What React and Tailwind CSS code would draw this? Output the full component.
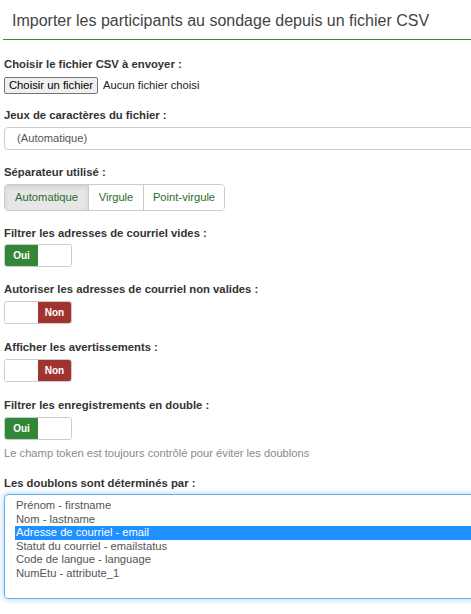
import React, { useState } from "react";

const font = { fontFamily: '"Liberation Sans", Arial, sans-serif' };

function Label({ children, className = "" }) {
  return (
    <div className={"h-[16px] leading-[16px] text-[11.3px] font-bold text-[#333] " + className}>
      {children}
    </div>
  );
}

function Toggle({ on }) {
  return (
    <div className="flex w-[68px] h-[23px] border border-[#ccc] rounded-[3px] overflow-hidden">
      {on ? (
        <>
          <div className="w-1/2 bg-[#328637] text-white text-[10px] font-bold flex items-center justify-center">
            Oui
          </div>
          <div className="w-1/2 bg-white" />
        </>
      ) : (
        <>
          <div className="w-1/2 bg-white" />
          <div className="w-1/2 bg-[#a03330] text-white text-[10px] font-bold flex items-center justify-center">
            Non
          </div>
        </>
      )}
    </div>
  );
}

export default function App() {
  const [sep, setSep] = useState("Automatique");
  const [picked, setPicked] = useState("Adresse de courriel - email");

  const separators = ["Automatique", "Virgule", "Point-virgule"];
  const fields = [
    "Prénom - firstname",
    "Nom - lastname",
    "Adresse de courriel - email",
    "Statut du courriel - emailstatus",
    "Code de langue - language",
    "NumEtu - attribute_1",
  ];

  return (
    <div className="w-[471px] h-[614px] overflow-hidden bg-white" style={font}>
      <div className="w-[520px] pl-[3px]">
        {/* Title */}
        <div className="pl-[9px] pt-[10px] pb-[7px] leading-[22px] text-[16px] text-[#444] border-b border-[#3e8a3f]">
          Importer les participants au sondage depuis un fichier CSV
        </div>

        <div className="pl-[1px]">
          {/* CSV file */}
          <Label className="mt-[16px]">Choisir le fichier CSV à envoyer :</Label>
          <div className="mt-[5px] flex items-center h-[17px]">
            <button className="h-[17px] w-[94px] px-[3px] text-[11.3px] leading-[15px] text-black bg-[#efefef] border border-[#767676] rounded-[2px]">
              Choisir un fichier
            </button>
            <span className="ml-[5px] text-[11.2px] text-[#222]">Aucun fichier choisi</span>
          </div>

          {/* Charset */}
          <Label className="mt-[13px]">Jeux de caractères du fichier :</Label>
          <div className="mt-[4px] h-[23px] border border-[#ccc] rounded-[4px] pl-[12px] flex items-center text-[11.2px] text-[#555]">
            (Automatique)
          </div>

          {/* Separator */}
          <Label className="mt-[14px]">Séparateur utilisé :</Label>
          <div className="mt-[4px] flex w-[221px] h-[27px] border border-[#ccc] rounded-[4px] overflow-hidden">
            {separators.map((s, i) => (
              <button
                key={s}
                onClick={() => setSep(s)}
                className={
                  "h-full flex items-center justify-center text-[11.2px] text-[#2d6a2f] " +
                  (i > 0 ? "border-l border-[#ccc] " : "") +
                  (i === 0 ? "w-[83px] " : i === 1 ? "w-[55px] " : "flex-1 ") +
                  (sep === s ? "bg-[#e6e6e6] shadow-[inset_0_2px_4px_rgba(0,0,0,0.1)]" : "bg-white")
                }
              >
                {s}
              </button>
            ))}
          </div>

          {/* Toggles */}
          <Label className="mt-[14px]">Filtrer les adresses de courriel vides :</Label>
          <div className="mt-[3px]">
            <Toggle on />
          </div>

          <Label className="mt-[14px]">Autoriser les adresses de courriel non valides :</Label>
          <div className="mt-[4px]">
            <Toggle on={false} />
          </div>

          <Label className="mt-[15px]">Afficher les avertissements :</Label>
          <div className="mt-[4px]">
            <Toggle on={false} />
          </div>

          <Label className="mt-[15px]">Filtrer les enregistrements en double :</Label>
          <div className="mt-[4px]">
            <Toggle on />
          </div>
          <div className="mt-[5px] h-[16px] leading-[16px] text-[11.2px] text-[#8a8a8a]">
            Le champ token est toujours contrôlé pour éviter les doublons
          </div>

          {/* Duplicates */}
          <Label className="mt-[14px]">Les doublons sont déterminés par :</Label>
          <div className="mt-[3px] h-[105px] border border-[#66afe9] rounded-[4px] shadow-[0_0_6px_rgba(102,175,233,0.6)] pt-[4px] pl-[10px]">
            {fields.map((f) => (
              <div
                key={f}
                onClick={() => setPicked(f)}
                className={
                  "h-[13.6px] leading-[13.6px] text-[11.2px] pl-[1px] " +
                  (picked === f ? "bg-[#1e90ff] text-white" : "text-[#555]")
                }
              >
                {f}
              </div>
            ))}
          </div>
        </div>
      </div>
    </div>
  );
}
